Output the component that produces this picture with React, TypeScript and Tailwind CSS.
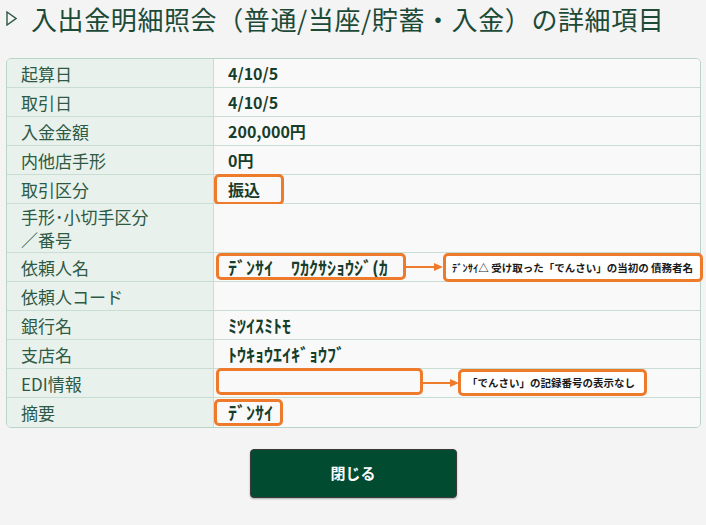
import React from 'react'

type Row = {
  label: React.ReactNode
  value?: string
  kana?: boolean
  tall?: boolean
  box?: { left: number; top: number; w: number; h: number }
  note?: { text: string; arrowLeft: number; arrowW: number; left: number; w: number; top: number; h: number }
}

const rows: Row[] = [
  { label: '起算日', value: '4/10/5' },
  { label: '取引日', value: '4/10/5' },
  { label: '入金金額', value: '200,000円' },
  { label: '内他店手形', value: '0円' },
  { label: '取引区分', value: '振込', box: { left: 0, top: -1, w: 70, h: 31 } },
  {
    label: (
      <>
        手形･小切手区分
        <br />
        ／番号
      </>
    ),
    tall: true,
  },
  {
    label: '依頼人名',
    value: 'ﾃﾞﾝｻｲ　ﾜｶｸｻｼｮｳｼﾞ(ｶ',
    kana: true,
    box: { left: 2, top: 0, w: 190, h: 27 },
    note: {
      text: 'ﾃﾞﾝｻｲ△ 受け取った「でんさい」の当初の 債務者名',
      arrowLeft: 191,
      arrowW: 38,
      left: 229,
      w: 260,
      top: 0,
      h: 29,
    },
  },
  { label: '依頼人コード' },
  { label: '銀行名', value: 'ﾐﾂｲｽﾐﾄﾓ', kana: true },
  { label: '支店名', value: 'ﾄｳｷｮｳｴｲｷﾞｮｳﾌﾞ', kana: true },
  {
    label: 'EDI情報',
    box: { left: 2, top: -1, w: 207, h: 27 },
    note: {
      text: '「でんさい」の記録番号の表示なし',
      arrowLeft: 208,
      arrowW: 37,
      left: 244,
      w: 189,
      top: 0,
      h: 27,
    },
  },
  { label: '摘要', value: 'ﾃﾞﾝｻｲ', kana: true, box: { left: 0, top: 1, w: 69, h: 27 } },
]

function Arrow({ w }: { w: number }) {
  return (
    <svg width={w} height="10" viewBox={`0 0 ${w} 10`}>
      <line x1="0" y1="5" x2={w - 8} y2="5" stroke="#ee7b2c" strokeWidth="2" />
      <polygon points={`${w - 9},1 ${w},5 ${w - 9},9`} fill="#ee7b2c" />
    </svg>
  )
}

export default function App() {
  return (
    <div
      className="min-h-screen w-full bg-[#f4f4f4] text-[#173d2b]"
      style={{ fontFamily: '"Noto Sans CJK JP", "Noto Sans", sans-serif' }}
    >
      {/* Title */}
      <div className="flex items-center h-[37px] pl-[6px]">
        <svg width="11" height="15" viewBox="0 0 11 15" className="mr-[14px]">
          <polygon points="1,1 10,7.5 1,14" fill="none" stroke="#2d5a45" strokeWidth="1.4" />
        </svg>
        <h1 className="text-[26px] leading-[37px] font-normal text-[#1c4a37] tracking-[0.6px]">
          入出金明細照会（普通/当座/貯蓄・入金）の詳細項目
        </h1>
      </div>

      {/* Detail table */}
      <div className="mt-[21px] ml-[6px] w-[695px] rounded-[5px] border border-[#b9d5c7]">
        {rows.map((row, i) => (
          <div
            key={i}
            className={`grid grid-cols-[207px_1fr] ${row.tall ? 'h-[49px]' : 'h-[29px]'} ${
              i < rows.length - 1 ? 'border-b border-[#c8ddd3]' : ''
            }`}
          >
            <div
              className={`flex items-center bg-[#e9f1ec] border-r border-[#c8ddd3] pl-[14px] text-[17px] leading-[23px] text-[#2d5a45] ${
                i === 0 ? 'rounded-tl-[4px]' : ''
              } ${i === rows.length - 1 ? 'rounded-bl-[4px]' : ''}`}
            >
              <span>{row.label}</span>
            </div>
            <div
              className={`relative flex items-center bg-[#f9f9f9] pl-[14px] font-bold ${
                row.kana ? 'text-[18px]' : 'text-[16px]'
              } ${i === 0 ? 'rounded-tr-[4px]' : ''} ${i === rows.length - 1 ? 'rounded-br-[4px]' : ''}`}
            >
              {row.value && <span className="whitespace-pre">{row.value}</span>}

              {row.box && (
                <div
                  className="absolute rounded-[5px] border-[3px] border-[#ee7b2c]"
                  style={{ left: row.box.left, top: row.box.top, width: row.box.w, height: row.box.h }}
                />
              )}

              {row.note && (
                <>
                  <div className="absolute top-[9px]" style={{ left: row.note.arrowLeft }}>
                    <Arrow w={row.note.arrowW} />
                  </div>
                  <div
                    className="absolute z-10 flex items-center rounded-[5px] border-[3px] border-[#ee7b2c] bg-white pl-[6px] text-[10.5px] font-semibold text-[#1a1a1a] whitespace-nowrap"
                    style={{ left: row.note.left, top: row.note.top, width: row.note.w, height: row.note.h }}
                  >
                    {row.note.text}
                  </div>
                </>
              )}
            </div>
          </div>
        ))}
      </div>

      {/* Close button */}
      <div className="flex justify-center mt-[21px]">
        <button className="w-[207px] h-[49px] rounded-[4px] border border-[#3b3b3b] bg-[#014b31] text-white text-[15px] font-bold shadow-[0_1px_2px_rgba(0,0,0,0.3)]">
          閉じる
        </button>
      </div>
    </div>
  )
}
